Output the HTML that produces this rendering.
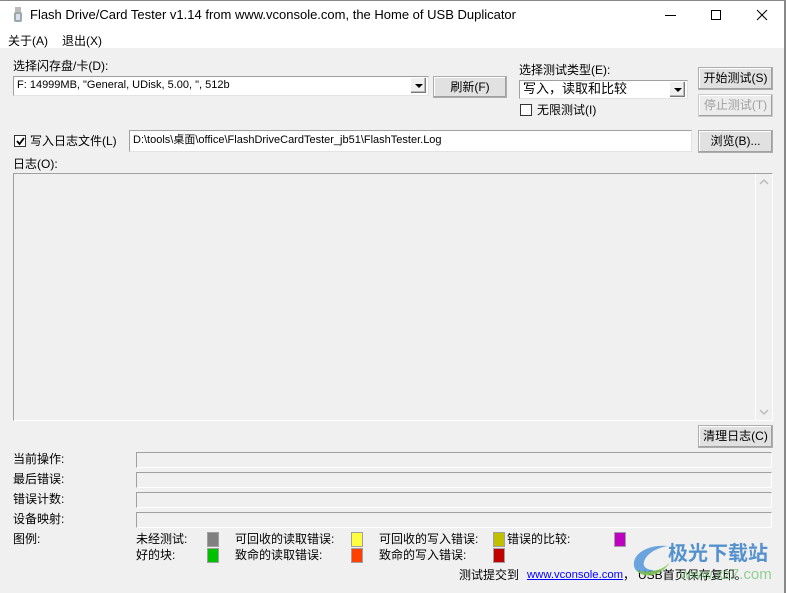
<!DOCTYPE html>
<html><head><meta charset="utf-8"><style>
*{box-sizing:border-box;margin:0;padding:0}
body{width:786px;height:593px;overflow:hidden;background:#f0f0f0;font-family:"Liberation Sans","Noto Sans CJK SC",sans-serif;font-size:12px;color:#000;position:relative}
.a{position:absolute;white-space:nowrap;line-height:14px}
.edit{position:absolute;background:#fff;border:1px solid #a0a0a0;border-right-color:#e3e3e3;border-bottom-color:#e3e3e3;padding:2px 3px;line-height:15px}
.btn{position:absolute;background:#e1e1e1;border:1px solid #adadad;box-shadow:inset -1px -1px 0 #a0a0a0,inset 1px 1px 0 #fff;text-align:center;line-height:20px}
.dd{position:absolute;width:17px;height:17px;background:#f0f0f0;border:1px solid #fff;box-shadow:inset -1px -1px 0 #777,inset -2px -2px 0 #bbb;}
.dd:after{content:"";position:absolute;left:4px;top:6px;border-left:4px solid transparent;border-right:4px solid transparent;border-top:4px solid #000}
.fld{position:absolute;left:136px;width:636px;height:16px;border:1px solid #a0a0a0;border-right-color:#fff;border-bottom-color:#fff}
.sw{position:absolute;width:12px;height:15px;border:1px solid #a0a0a0}
.cb{position:absolute;width:12px;height:12px;background:#fff;border:1px solid #333}
</style></head><body>
<div style="position:absolute;left:0;top:0;width:786px;height:48px;background:#fff"></div>
<div style="position:absolute;right:0;top:0;width:2px;height:593px;background:#888"></div>
<div style="position:absolute;left:0;top:0;width:786px;height:1px;background:#888"></div>
<svg class="a" style="left:14px;top:7px" width="8" height="16"><rect x="1" y="0" width="6" height="5" fill="#bbb"/><rect x="0" y="5" width="8" height="10" rx="2" fill="#9aa"/><rect x="2" y="7" width="4" height="6" fill="#dde"/></svg>
<div class="a" style="left:30px;top:8px;font-size:13px">Flash Drive/Card Tester v1.14 from www.vconsole.com, the Home of USB Duplicator</div>
<div class="a" style="left:665px;top:15px;width:11px;height:1px;background:#000"></div>
<div class="a" style="left:711px;top:10px;width:10px;height:10px;border:1px solid #000"></div>
<svg class="a" style="left:756px;top:9px" width="12" height="12"><path d="M1 1L11 11M11 1L1 11" stroke="#000" stroke-width="1"/></svg>
<div class="a" style="left:8px;top:34px">关于(A)</div>
<div class="a" style="left:62px;top:34px">退出(X)</div>

<div class="a" style="left:13px;top:59px">选择闪存盘/卡(D):</div>
<div class="edit" style="left:13px;top:76px;width:416px;height:20px;padding-top:1px;font-size:11px">F: 14999MB, "General, UDisk, 5.00, ", 512b</div>
<div class="dd" style="left:410px;top:77px"></div>
<div class="btn" style="left:433px;top:76px;width:74px;height:22px">刷新(F)</div>

<div class="a" style="left:519px;top:63px">选择测试类型(E):</div>
<div class="edit" style="left:519px;top:80px;width:169px;height:19px;padding-top:0px;font-size:13px">写入，读取和比较</div>
<div class="dd" style="left:669px;top:81px"></div>
<div class="cb" style="left:520px;top:104px"></div>
<div class="a" style="left:537px;top:103px">无限测试(I)</div>
<div class="btn" style="left:698px;top:67px;width:75px;height:23px">开始测试(S)</div>
<div class="btn" style="left:698px;top:94px;width:75px;height:23px;color:#a0a0a0;background:#ececec;border-color:#ccc">停止测试(T)</div>

<div class="cb" style="left:14px;top:135px"></div>
<svg class="a" style="left:15px;top:136px" width="11" height="11"><path d="M2 5L4.5 8L9 2" stroke="#000" stroke-width="1.8" fill="none"/></svg>
<div class="a" style="left:30px;top:134px">写入日志文件(L)</div>
<div class="edit" style="left:129px;top:130px;width:563px;height:22px;font-size:11px">D:\tools\桌面\office\FlashDriveCardTester_jb51\FlashTester.Log</div>
<div class="btn" style="left:698px;top:130px;width:75px;height:23px">浏览(B)...</div>

<div class="a" style="left:13px;top:157px">日志(O):</div>
<div style="position:absolute;left:13px;top:173px;width:760px;height:248px;border:1px solid #a0a0a0;border-right-color:#fff;border-bottom-color:#fff"></div>
<div style="position:absolute;left:755px;top:174px;width:1px;height:246px;background:#fff"></div>
<svg class="a" style="left:759px;top:178px" width="10" height="8"><path d="M1 6L5 2L9 6" stroke="#bbb" stroke-width="1.5" fill="none"/></svg>
<svg class="a" style="left:759px;top:408px" width="10" height="8"><path d="M1 2L5 6L9 2" stroke="#bbb" stroke-width="1.5" fill="none"/></svg>
<div class="btn" style="left:698px;top:425px;width:75px;height:23px">清理日志(C)</div>

<div class="a" style="left:13px;top:452px">当前操作:</div>
<div class="a" style="left:13px;top:472px">最后错误:</div>
<div class="a" style="left:13px;top:492px">错误计数:</div>
<div class="a" style="left:13px;top:512px">设备映射:</div>
<div class="fld" style="top:452px"></div>
<div class="fld" style="top:472px"></div>
<div class="fld" style="top:492px"></div>
<div class="fld" style="top:512px"></div>

<div class="a" style="left:13px;top:532px">图例:</div>
<div class="a" style="left:136px;top:532px">未经测试:</div>
<div class="a" style="left:136px;top:548px">好的块:</div>
<div class="sw" style="left:207px;top:532px;background:#808080"></div>
<div class="sw" style="left:207px;top:548px;background:#00c000"></div>
<div class="a" style="left:235px;top:532px">可回收的读取错误:</div>
<div class="a" style="left:235px;top:548px">致命的读取错误:</div>
<div class="sw" style="left:351px;top:532px;background:#ffff40"></div>
<div class="sw" style="left:351px;top:548px;background:#ff4000"></div>
<div class="a" style="left:379px;top:532px">可回收的写入错误:</div>
<div class="a" style="left:379px;top:548px">致命的写入错误:</div>
<div class="sw" style="left:493px;top:532px;background:#c0c000"></div>
<div class="sw" style="left:493px;top:548px;background:#c00000"></div>
<div class="a" style="left:507px;top:532px">错误的比较:</div>
<div class="sw" style="left:614px;top:532px;background:#c000c0"></div>

<div class="a" style="left:459px;top:568px">测试提交到</div>
<div class="a" style="left:527px;top:568px;color:#0000ff;text-decoration:underline;font-size:11.3px">www.vconsole.com</div>
<div class="a" style="left:623px;top:568px">，</div>
<div class="a" style="left:638px;top:568px">USB首页保存复印。</div>

<svg class="a" style="left:628px;top:540px" width="48" height="40"><path d="M40 6C20 4 4 14 6 26C8 36 24 36 34 30C22 32 14 28 16 22C18 14 28 8 40 6Z" fill="#4a90d9" opacity=".8"/><path d="M8 30C16 40 34 36 42 22C36 30 20 34 8 30Z" fill="#7cc043" opacity=".8"/></svg>
<div class="a" style="left:668px;top:542px;font-size:20px;line-height:24px;font-weight:bold;color:#3b82c8;opacity:.85">极光下载站</div>
<div class="a" style="left:680px;top:566px;font-size:15px;line-height:18px;color:#6cc06c;opacity:.7">www.xz7.com</div>
</body></html>
